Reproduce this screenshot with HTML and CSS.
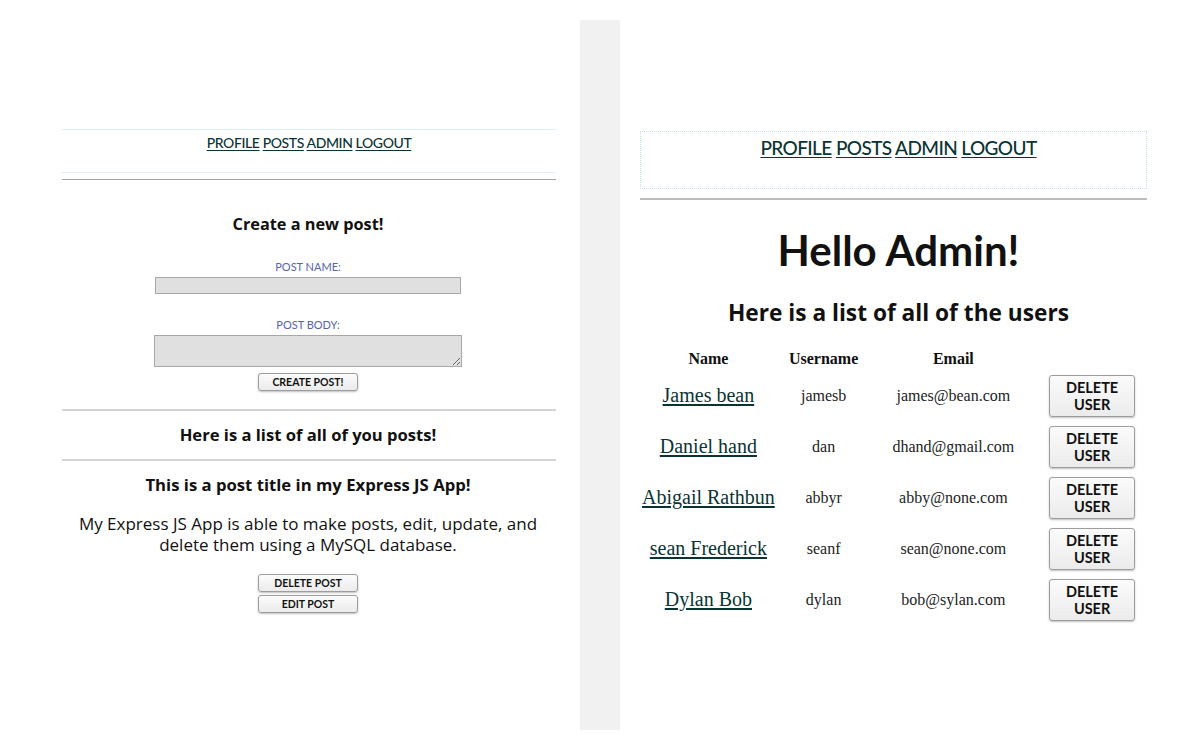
FILE: index.html
```html
<!DOCTYPE html>
<html lang="en">
<head>
<meta charset="utf-8">
<title>Express JS App</title>
<link rel="stylesheet" href="styles.css">
</head>
<body>
<div class="page">
  <section class="panel panel-left">
    <nav class="nav nav-left">
      <a href="#">PROFILE</a> <a href="#">POSTS</a> <a href="#">ADMIN</a> <a href="#">LOGOUT</a>
    </nav>
    <hr class="rule rule-thin">
    <h3 class="title title-create">Create a new post!</h3>
    <form class="post-form">
      <label class="field-label">POST NAME:</label>
      <input class="field-input" type="text">
      <label class="field-label field-label-body">POST BODY:</label>
      <textarea class="field-area"></textarea>
      <button class="btn btn-small btn-create" type="button">CREATE POST!</button>
    </form>
    <hr class="rule rule-light rule-a">
    <h3 class="title title-list">Here is a list of all of you posts!</h3>
    <hr class="rule rule-light rule-b">
    <h3 class="title title-post">This is a post title in my Express JS App!</h3>
    <p class="post-body">My Express JS App is able to make posts, edit, update, and<br>delete them using a MySQL database.</p>
    <div class="post-actions">
      <button class="btn btn-small" type="button">DELETE POST</button>
      <button class="btn btn-small" type="button">EDIT POST</button>
    </div>
  </section>

  <div class="divider"></div>

  <section class="panel panel-right">
    <nav class="nav nav-right">
      <a href="#">PROFILE</a> <a href="#">POSTS</a> <a href="#">ADMIN</a> <a href="#">LOGOUT</a>
    </nav>
    <hr class="rule rule-thick">
    <h1 class="hello">Hello Admin!</h1>
    <h2 class="subhead">Here is a list of all of the users</h2>
    <table class="users">
      <thead>
        <tr><th class="c-name">Name</th><th class="c-user">Username</th><th class="c-mail">Email</th><th class="c-act"></th></tr>
      </thead>
      <tbody>
        <tr><td><a href="#">James bean</a></td><td>jamesb</td><td>james@bean.com</td><td><button class="btn btn-user" type="button">DELETE<br>USER</button></td></tr>
        <tr><td><a href="#">Daniel hand</a></td><td>dan</td><td>dhand@gmail.com</td><td><button class="btn btn-user" type="button">DELETE<br>USER</button></td></tr>
        <tr><td><a href="#">Abigail Rathbun</a></td><td>abbyr</td><td>abby@none.com</td><td><button class="btn btn-user" type="button">DELETE<br>USER</button></td></tr>
        <tr><td><a href="#">sean Frederick</a></td><td>seanf</td><td>sean@none.com</td><td><button class="btn btn-user" type="button">DELETE<br>USER</button></td></tr>
        <tr><td><a href="#">Dylan Bob</a></td><td>dylan</td><td>bob@sylan.com</td><td><button class="btn btn-user" type="button">DELETE<br>USER</button></td></tr>
      </tbody>
    </table>
  </section>
</div>
</body>
</html>
```

FILE: styles.css
```css
* { box-sizing: border-box; }

html, body {
  margin: 0;
  padding: 0;
  background: #ffffff;
}

body {
  font-family: "Open Sans", "Lato", sans-serif;
  color: #111;
}

.page {
  display: flex;
  align-items: flex-start;
  width: 1200px;
  height: 750px;
}

.panel { flex: none; }

.panel-left {
  width: 580px;
  padding: 129px 24px 0 60px;
  text-align: center;
}

.divider {
  flex: none;
  width: 40px;
  height: 710px;
  margin-top: 20px;
  background: #f1f1f1;
}

.panel-right {
  width: 580px;
  padding: 131px 53px 0 20px;
  text-align: center;
}

/* nav */
.nav {
  font-family: "Lato", "Open Sans", sans-serif;
  font-weight: 500;
}

.nav a {
  color: #0a3434;
  text-decoration: underline;
  text-underline-offset: 2px;
}

.nav-left {
  height: 44px;
  margin-left: 2px;
  border-top: 1px solid #dcf1f5;
  border-bottom: 1px solid #dcf1f5;
  padding-top: 4px;
  font-size: 14px;
  line-height: 18px;
  letter-spacing: -0.4px;
}

.nav-right {
  height: 58px;
  border: 1px dotted #bfe6ec;
  padding: 4px 0 0 10px;
  font-size: 19px;
  line-height: 24px;
  letter-spacing: -0.6px;
}

/* rules */
.rule {
  border: 0;
  margin: 0;
  height: 0;
}
.rule-thin {
  margin: 6px 0 0 2px;
  border-top: 1px solid #a2a2a2;
}
.rule-light {
  margin-left: 2px;
  border-top: 2px solid #d4d4d4;
}
.rule-a { margin-top: 18px; }
.rule-b { margin-top: 14px; }
.rule-thick {
  margin-top: 9px;
  border-top: 2px solid #bdbdbd;
}

/* left panel text */
.title {
  margin: 0;
  font-size: 16px;
  line-height: 20px;
  font-weight: bold;
}
.title-create { margin-top: 34px; font-size: 16.3px; }
.title-list { margin-top: 14px; font-size: 16.6px; }
.title-post { margin-top: 14px; font-size: 16.7px; }

.post-form {
  display: flex;
  flex-direction: column;
  align-items: center;
}

.field-label {
  margin-top: 26px;
  font-family: "Lato", sans-serif;
  font-size: 11px;
  line-height: 14px;
  color: #5564ad;
}
.field-label-body { margin-top: 24px; }

.field-input {
  margin-top: 3px;
  width: 306px;
  height: 17px;
  background: #e0e0e0;
  border: 1px solid #a8a8a8;
  padding: 0;
}

.field-area {
  margin-top: 3px;
  width: 308px;
  height: 32px;
  background: #e0e0e0;
  border: 1px solid #a8a8a8;
  padding: 0;
  resize: vertical;
}

.btn {
  font-family: "Lato", "Open Sans", sans-serif;
  font-weight: bold;
  color: #111;
  background: linear-gradient(#fbfbfb, #ebebeb);
  border: 1px solid #9d9d9d;
  border-radius: 3px;
  box-shadow: 0 1px 2px rgba(0, 0, 0, 0.25);
  padding: 0;
  cursor: pointer;
}

.btn-small {
  width: 100px;
  height: 18px;
  font-size: 10.5px;
  line-height: 16px;
}

.btn-create { margin-top: 6px; }

.post-body {
  margin: 18px 0 0;
  font-size: 17px;
  line-height: 21px;
}

.post-actions {
  margin-top: 19px;
  display: flex;
  flex-direction: column;
  align-items: center;
  gap: 3px;
}

/* right panel */
.hello {
  margin: 25px 0 0;
  padding-left: 10px;
  font-family: "Lato", sans-serif;
  font-size: 42px;
  line-height: 50px;
  font-weight: bold;
}

.subhead {
  margin: 24px 0 0;
  padding-left: 10px;
  font-size: 22.7px;
  line-height: 28px;
  font-weight: bold;
}

.users {
  margin: 21px 0 0 2px;
  border-collapse: collapse;
  font-family: "Liberation Serif", "Times New Roman", serif;
  font-size: 16px;
}

.users th {
  height: 22px;
  padding: 0;
  font-weight: bold;
  vertical-align: middle;
}

.users td {
  height: 51px;
  padding: 0;
  text-align: center;
  vertical-align: middle;
  white-space: nowrap;
  color: #222;
}

.users td a {
  font-size: 20px;
  color: #0a3434;
  text-underline-offset: 2px;
}

.c-name { width: 132px; }
.c-user { width: 98px; }
.c-mail { width: 162px; }
.c-act { width: 113px; }

.btn-user {
  width: 86px;
  height: 42px;
  font-size: 14.5px;
  line-height: 17px;
  margin-left: 3px;
}
```
